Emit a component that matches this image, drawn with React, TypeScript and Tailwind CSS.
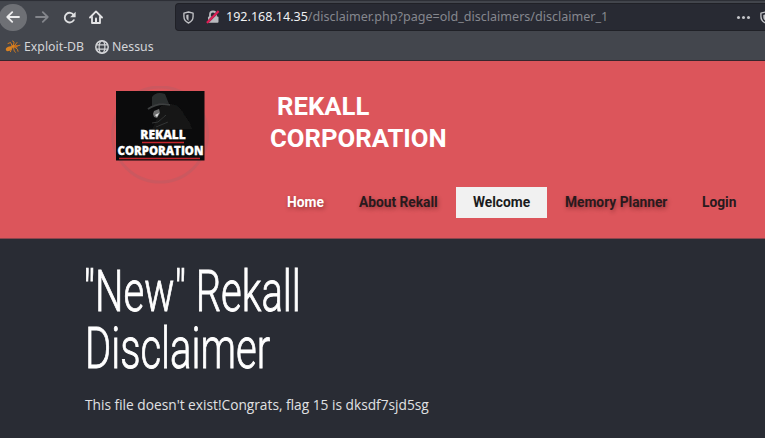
import React from "react";

function Shield({ className = "" }: { className?: string }) {
  return (
    <svg viewBox="0 0 12 14" className={`h-[13px] w-[11px] shrink-0 ${className}`} fill="none">
      <path d="M6 1 11 2.3V6c0 3.500-2 5.800-5 7-3-1.200-5-3.500-5-7V2.300Z" stroke="#bfc0c4" strokeWidth="1.500" strokeLinejoin="round" />
      <path d="M6 3.600 3.600 4.200V6.500c0 2 .8 3.200 2.400 4.200Z" fill="#bfc0c4" />
    </svg>
  );
}

function CrossedLock() {
  return (
    <svg viewBox="0 0 14 14" className="h-[14px] w-[14px] shrink-0" fill="none">
      <path d="M4 7V4.500a3 3 0 0 1 6 0V7" stroke="#b9babf" strokeWidth="1.800" />
      <rect x="2" y="6.500" width="10.500" height="6.300" rx="1" fill="#b9babf" />
      <path d="M1 12.800 12.600 1.200" stroke="#8a2848" strokeWidth="2.600" />
      <path d="M1 12.800 12.600 1.200" stroke="#e01f56" strokeWidth="1.800" />
    </svg>
  );
}

function Arrow({ className }: { className: string }) {
  return (
    <svg viewBox="0 0 14 12" className={className} fill="none" stroke="currentColor" strokeWidth="1.800" strokeLinecap="round" strokeLinejoin="round">
      <path d="M13 6H1.500M6.200 1.200 1.300 6l4.900 4.800" />
    </svg>
  );
}

function Bug() {
  return (
    <svg viewBox="0 0 16 14" className="h-[14px] w-[16px]" fill="none" stroke="#d17a20" strokeWidth="1" strokeLinecap="round">
      <ellipse cx="4" cy="8.700" rx="3.300" ry="2.100" transform="rotate(-22 4 8.700)" fill="#d98222" stroke="none" />
      <ellipse cx="8.300" cy="6.300" rx="2.200" ry="1.600" fill="#d98222" stroke="none" />
      <ellipse cx="11" cy="6.400" rx="1.600" ry="1.300" fill="#c76b18" stroke="none" />
      <path d="M7 5.500 5.500 2.500 3 3.500M8.500 5l.6-3L7.500 1M10 5l2-2.500M12 6l3-.8M7 7.700l-1.600 4M8.500 7.700l.8 3.500 1.200 1M10 7.300l2.500 2 .5 2" />
    </svg>
  );
}

function Toolbar() {
  return (
    <header className="h-[61px] border-b border-[#37262d] bg-[#43464d] font-['Noto_Sans',sans-serif]">
      <div className="h-[2px] border-b border-[#41444b] bg-[#2d2f36]" />
      <div className="flex h-[30px] items-center">
        <div className="-ml-px flex h-[27px] w-[28px] shrink-0 items-center justify-center rounded-full bg-[#6e7075]">
          <Arrow className="h-[12px] w-[14px] text-[#ededee]" />
        </div>
        <Arrow className="ml-2 h-[12px] w-[14px] rotate-180 text-[#83858b]" />
        <svg viewBox="0 0 14 14" className="ml-[14px] h-[13px] w-[13px]" fill="none">
          <path d="M11.600 9.800A5.200 5.200 0 1 1 11.600 4.500" stroke="#dedfe1" strokeWidth="2" strokeLinecap="round" />
          <path d="M13.600.8v6H7.600Z" fill="#dedfe1" />
        </svg>
        <svg viewBox="0 0 14 14" className="ml-[13px] h-[14px] w-[14px]" fill="none" stroke="#e4e4e6" strokeLinecap="round" strokeLinejoin="round">
          <path d="M1 7.500 7 1.400l6 6.100" strokeWidth="1.800" />
          <path d="M3 7v6h8V7" strokeWidth="1.800" />
          <path d="M7 12V8.500" strokeWidth="2" />
        </svg>
        <div className="ml-[72px] flex h-[28px] flex-1 items-center overflow-hidden rounded-l-[4px] border border-r-0 border-[#202127] bg-[#282a33] pl-[7px]">
          <Shield />
          <div className="ml-[6px] h-[19px] w-px bg-[#17181d]" />
          <div className="ml-[6px]"><CrossedLock /></div>
          <p className="ml-[6px] w-[382px] whitespace-nowrap text-[12.560px] leading-[18px] text-[#85878e]">
            <span className="text-[#f1f1f2]">192.168.14.35</span>/disclaimer.php?page=old_disclaimers/disclaimer_1
          </p>
          <div className="ml-[129px] flex w-[13px] shrink-0 justify-between">
            <i className="h-[3px] w-[3px] rounded-full bg-[#c4c5c9]" />
            <i className="h-[3px] w-[3px] rounded-full bg-[#c4c5c9]" />
            <i className="h-[3px] w-[3px] rounded-full bg-[#c4c5c9]" />
          </div>
          <Shield className="ml-[10px]" />
        </div>
      </div>
      <div className="flex h-[28px] items-center pl-[5px] pt-[2px] text-[12.300px] leading-[18px] text-[#d4d5d8]">
        <Bug />
        <span className="ml-[3px] w-[62px] whitespace-nowrap">Exploit-DB</span>
        <svg viewBox="0 0 14 14" className="ml-[9px] h-[14px] w-[14px]" fill="none" stroke="#d4d5d8" strokeWidth="1.200">
          <circle cx="7" cy="7" r="6.200" strokeWidth="1.500" />
          <ellipse cx="7" cy="7" rx="2.900" ry="6.200" />
          <path d="M1.400 4.800h11.200M1.400 9.200h11.200" />
        </svg>
        <span className="ml-[3px]">Nessus</span>
      </div>
    </header>
  );
}

function Logo() {
  return (
    <svg viewBox="0 0 100 100" className="h-[100px] w-[100px]">
      <defs>
        <filter id="soft"><feGaussianBlur stdDeviation=".7" /></filter>
      </defs>
      <circle cx="50" cy="48.500" r="47.500" fill="none" stroke="#c65a60" strokeWidth="3" opacity=".75" />
      <rect x="6" y="5" width="88.500" height="69.500" fill="#0b0b0c" />
      <g filter="url(#soft)">
        <path d="M47 27c3-8 8-10 14-9 7 1 11 5 13 11 4 4 6 8 8 14H42l4-7Z" fill="#151616" />
        <path d="M42 20V11c3-4 7-5 13-3l4 10c-6-1-11 0-17 2Z" fill="#2b2d2e" />
        <path d="M38 23c6-4 14-6 22-4" stroke="#3e4041" strokeWidth="1.800" fill="none" />
        <path d="m44 25 5-2 1 4-3 5-3-1-1-3Z" fill="#6f7070" />
        <path d="m45 29 4-2-2 4Z" fill="#e6e6e6" />
        <path d="m42 37 6-1 8-7M46 41l12-5" stroke="#343636" strokeWidth="1" fill="none" />
      </g>
      <g fill="#fff" fontFamily="'Open Sans', sans-serif" fontWeight="800" fontSize="11.500" stroke="#fff" strokeWidth=".3">
        <text x="30.300" y="53" textLength="45.500" lengthAdjust="spacingAndGlyphs">REKALL</text>
        <text x="7.500" y="68.800" textLength="86" lengthAdjust="spacingAndGlyphs">CORPORATION</text>
      </g>
      <path d="M32 56.500h42M9 72.500h81" stroke="#c4262d" strokeWidth="1.600" />
    </svg>
  );
}

function Nav() {
  return (
    <nav className="flex h-[31px] items-center whitespace-nowrap font-['Roboto',sans-serif] text-[13.750px] font-bold text-[#291a1d]">
      <a className="w-[72px] text-white [text-shadow:1px_2px_4px_rgba(50,0,0,0.4)]">Home</a>
      <a className="w-[97px] [text-shadow:1px_2px_4px_rgba(50,0,0,0.4)]">About Rekall</a>
      <a className="flex h-[31px] w-[91px] items-center justify-center bg-[#f1f1f1] text-[#1a1c20]">Welcome</a>
      <a className="ml-[18px] w-[137px] [text-shadow:1px_2px_4px_rgba(50,0,0,0.4)]">Memory Planner</a>
      <a>Login</a>
    </nav>
  );
}

export default function App() {
  return (
    <div className="flex h-[438px] w-[765px] flex-col overflow-hidden bg-[#292c34]">
      <Toolbar />
      <section className="flex h-[178px] shrink-0 border-b border-[#8c454d] bg-[#dc555b] pl-[110px] pt-[25px]">
        <Logo />
        <div className="ml-[60px] pt-[4px]">
          <h1 className="font-['Roboto',sans-serif] text-[25.700px] font-bold leading-[32px] text-white">
            <span className="block pl-[7px]">REKALL</span>
            <span className="block">CORPORATION</span>
          </h1>
          <div className="ml-[17px] mt-[33px]"><Nav /></div>
        </div>
      </section>
      <main className="pl-[85px] pt-[24px] text-white">
        <h2 className="origin-left scale-x-[0.702] whitespace-nowrap font-['Roboto',sans-serif] text-[57px] font-light leading-[57px] [-webkit-text-stroke:0.900px_white]">
          <span className="-ml-[2px] block">"New" Rekall</span>
          <span className="block">Disclaimer</span>
        </h2>
        <p className="mt-[18px] font-['Open_Sans',sans-serif] text-[13.720px] leading-[20px] text-[#e0e1e3]">
          This file doesn't exist!Congrats, flag 15 is dksdf7sjd5sg
        </p>
      </main>
    </div>
  );
}
